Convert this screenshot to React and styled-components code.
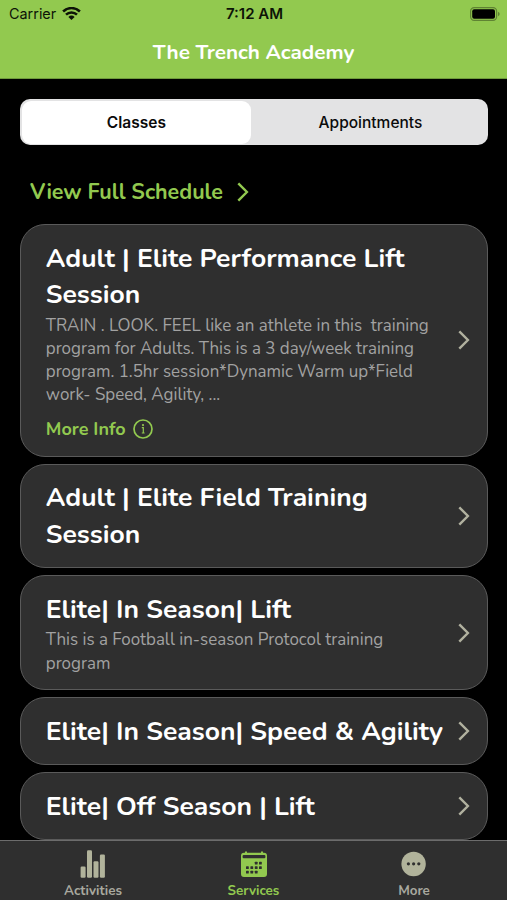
import React, { useState } from "react";
import styled, { createGlobalStyle } from "styled-components";

const services = [
  {
    title: ["Adult | Elite Performance Lift", "Session"],
    description: [
      "TRAIN . LOOK. FEEL like an athlete in this  training",
      "program for Adults. This is a 3 day/week training",
      "program. 1.5hr session*Dynamic Warm up*Field",
      "work- Speed, Agility, ...",
    ],
    moreInfo: true,
  },
  { title: ["Adult | Elite Field Training", "Session"] },
  {
    title: ["Elite| In Season| Lift"],
    description: ["This is a Football in-season Protocol training", "program"],
  },
  { title: ["Elite| In Season| Speed & Agility"] },
  { title: ["Elite| Off Season | Lift"] },
];

export default function App() {
  const [segment, setSegment] = useState("Classes");

  return (
    <>
      <GlobalStyle />
      <Screen>
        <Header>
          <StatusBar>
            <Carrier>
              <span>Carrier</span>
              <WifiIcon />
            </Carrier>
            <Clock>7:12 AM</Clock>
            <BatteryIcon />
          </StatusBar>
          <HeaderTitle>The Trench Academy</HeaderTitle>
        </Header>
        <Content>
          <Segments>
            {["Classes", "Appointments"].map((name) => (
              <Segment key={name} $active={segment === name} onClick={() => setSegment(name)}>
                {name}
              </Segment>
            ))}
          </Segments>
          <ScheduleLink>
            <span>View Full Schedule</span>
            <Chevron color="#92c94f" />
          </ScheduleLink>
          <CardList>
            {services.map((service, i) => (
              <Card key={i}>
                <CardBody>
                  <CardTitle>
                    {service.title.map((text) => (
                      <Line key={text}>{text}</Line>
                    ))}
                  </CardTitle>
                  {service.description && (
                    <Description>
                      {service.description.map((text) => (
                        <Line key={text}>{text}</Line>
                      ))}
                    </Description>
                  )}
                  {service.moreInfo && (
                    <MoreInfo>
                      <span>More Info</span>
                      <InfoIcon />
                    </MoreInfo>
                  )}
                </CardBody>
                <Chevron color="#b1b19f" />
              </Card>
            ))}
          </CardList>
        </Content>
        <TabBar>
          <Tab>
            <ActivitiesIcon />
            <TabLabel>Activities</TabLabel>
          </Tab>
          <Tab $active>
            <CalendarIcon />
            <TabLabel>Services</TabLabel>
          </Tab>
          <Tab>
            <MoreIcon />
            <TabLabel>More</TabLabel>
          </Tab>
        </TabBar>
      </Screen>
    </>
  );
}

function WifiIcon() {
  return (
    <svg width="19" height="14" viewBox="0 0 19 14" fill="none" stroke="#0d1407" strokeWidth="2.5">
      <path d="M1.1 4.5a12 12 0 0 1 16.8 0" />
      <path d="M4 7.7a7.8 7.8 0 0 1 11 0" />
      <path d="M9.5 13 6.4 9.9a4.4 4.4 0 0 1 6.2 0z" fill="#0d1407" stroke="none" />
    </svg>
  );
}

function BatteryIcon() {
  return (
    <svg width="30" height="14" viewBox="0 0 30 14">
      <rect x="0.6" y="0.6" width="26" height="12.8" rx="3.6" fill="none" stroke="#5f8333" strokeWidth="1.2" />
      <rect x="2.2" y="2.2" width="22.8" height="9.6" rx="2" fill="#000" />
      <path d="M28 4.8v4.4q1.7-.7 1.7-2.2T28 4.8z" fill="#5f8333" />
    </svg>
  );
}

function Chevron({ color }) {
  return (
    <svg width="12" height="20" viewBox="0 0 12 20" fill="none" stroke={color} strokeWidth="2.4">
      <path d="M1.3 1.3 9.9 10l-8.6 8.7" />
    </svg>
  );
}

function InfoIcon() {
  return (
    <svg width="20" height="20" viewBox="0 0 20 20" fill="none" stroke="#92c94f">
      <circle cx="10" cy="10" r="9" strokeWidth="1.7" />
      <path d="M8.8 8.7h1.5v5.3M8.8 14h2.8" strokeWidth="1.2" />
      <circle cx="10" cy="6.1" r="1.1" fill="#92c94f" stroke="none" />
    </svg>
  );
}

function ActivitiesIcon() {
  return (
    <svg width="26" height="28" viewBox="0 0 26 28" fill="#b1b39b">
      <rect x="0.6" y="16.6" width="5" height="11.2" rx="1.2" />
      <rect x="7" y="0.2" width="5" height="27.6" rx="1.2" />
      <rect x="13.5" y="11.2" width="5" height="16.6" rx="1.2" />
      <rect x="19.9" y="4.6" width="5" height="23.2" rx="1.2" />
    </svg>
  );
}

function CalendarIcon() {
  return (
    <svg width="26" height="28" viewBox="0 0 26 28">
      <path d="M3 2.8h1V1.4h2v1.4h14V1.4h2v1.4h1a3 3 0 0 1 3 3V24a3 3 0 0 1-3 3H3a3 3 0 0 1-3-3V5.8a3 3 0 0 1 3-3z" fill="#92c94f" />
      <rect x="1.6" y="5" width="22.8" height="3.2" rx="1" fill="#2f2f2f" />
      <g fill="#2f2f2f">
        <rect x="13.8" y="11.7" width="2.8" height="2.8" rx="0.6" />
        <rect x="18" y="11.7" width="2.8" height="2.8" rx="0.6" />
        <rect x="5" y="16.2" width="2.8" height="2.8" rx="0.6" />
        <rect x="9.4" y="16.2" width="2.8" height="2.8" rx="0.6" />
        <rect x="13.8" y="16.2" width="2.8" height="2.8" rx="0.6" />
        <rect x="18" y="16.2" width="2.8" height="2.8" rx="0.6" />
        <rect x="5" y="20.7" width="2.8" height="2.8" rx="0.6" />
        <rect x="9.4" y="20.7" width="2.8" height="2.8" rx="0.6" />
        <rect x="13.8" y="20.7" width="2.8" height="2.8" rx="0.6" />
      </g>
    </svg>
  );
}

function MoreIcon() {
  return (
    <svg width="26" height="28" viewBox="0 0 26 28">
      <circle cx="12.6" cy="14" r="12.2" fill="#b1b39b" />
      <g fill="#2f2f2f">
        <circle cx="7.4" cy="13.8" r="1.6" />
        <circle cx="12.6" cy="13.8" r="1.6" />
        <circle cx="17.8" cy="13.8" r="1.6" />
      </g>
    </svg>
  );
}

const GlobalStyle = createGlobalStyle`
  * {
    box-sizing: border-box;
  }
  body {
    margin: 0;
    background: #000;
  }
  button {
    border: 0;
    padding: 0;
    background: none;
    font: inherit;
    color: inherit;
  }
  svg {
    display: block;
    flex: none;
  }
`;

const Screen = styled.div`
  display: flex;
  flex-direction: column;
  height: 900px;
  overflow: hidden;
  background: #000;
  font-family: Nunito, "Noto Sans", sans-serif;
`;

const Header = styled.header`
  flex: none;
  height: 79px;
  background: #92c94f;
  border-bottom: 1px solid #6f9a3c;
`;

const StatusBar = styled.div`
  display: grid;
  grid-template-columns: 1fr auto 1fr;
  align-items: center;
  height: 27px;
  padding: 0 7px 0 9px;
  font-family: Inter, sans-serif;
  color: #0d1407;
  > :last-child {
    justify-self: end;
  }
`;

const Carrier = styled.div`
  display: flex;
  align-items: center;
  gap: 6px;
  font-size: 14.4px;
`;

const Clock = styled.div`
  font-size: 15px;
  font-weight: 600;
`;

const HeaderTitle = styled.h1`
  margin: 0;
  line-height: 50px;
  text-align: center;
  font-size: 20.7px;
  font-weight: 700;
  color: #fff;
`;

const Content = styled.main`
  flex: 1;
  min-height: 0;
  overflow: hidden;
  padding: 19.5px 19.5px 0 20.4px;
`;

const Segments = styled.div`
  display: grid;
  grid-template-columns: 229px 1fr;
  gap: 3px;
  height: 46.5px;
  padding: 2px 0.5px 1.5px 1.5px;
  border-radius: 10px;
  background: #e3e3e4;
`;

const Segment = styled.button`
  padding-top: 1px;
  border-radius: 9px;
  background: ${({ $active }) => ($active ? "#fff" : "transparent")};
  font-family: Inter, sans-serif;
  font-size: 15.5px;
  font-weight: ${({ $active }) => ($active ? 600 : 500)};
  color: #0b0b0b;
`;

const ScheduleLink = styled.button`
  display: flex;
  align-items: center;
  gap: 13.5px;
  height: 30px;
  margin: 32px 0 16.8px 9.6px;
  font-size: 21.5px;
  font-weight: 700;
  color: #92c94f;
`;

const CardList = styled.div`
  display: flex;
  flex-direction: column;
  gap: 7px;
`;

const Card = styled.article`
  display: flex;
  align-items: center;
  justify-content: space-between;
  padding: 14.8px 17px 14.4px 24.4px;
  border: 1px solid #5a5a5a;
  border-radius: 25px;
  background: #2f2f2f;
`;

const CardBody = styled.div`
  flex: 1;
  min-width: 0;
`;

const CardTitle = styled.h2`
  margin: 0;
  font-size: 26.5px;
  font-weight: 700;
  line-height: 36.7px;
  color: #fff;
`;

const Description = styled.p`
  margin: 0;
  padding-top: 0.6px;
  font-size: 16.95px;
  line-height: 23.3px;
  color: #a2a2a2;
`;

const Line = styled.span`
  display: block;
  white-space: pre;
`;

const MoreInfo = styled.button`
  display: flex;
  align-items: center;
  gap: 7px;
  height: 24px;
  margin-top: 10.5px;
  font-size: 18px;
  font-weight: 700;
  color: #92c94f;
`;

const TabBar = styled.nav`
  display: grid;
  grid-template-columns: 186px 1fr 186px;
  flex: none;
  height: 60px;
  border-top: 1px solid #6c6c6c;
  background: #2f2f2f;
`;

const Tab = styled.button`
  display: flex;
  flex-direction: column;
  align-items: center;
  padding-top: 9px;
  color: ${({ $active }) => ($active ? "#92c94f" : "#a9a99f")};
`;

const TabLabel = styled.span`
  margin-top: 3px;
  font-size: 13.4px;
  font-weight: 700;
  line-height: 20px;
`;
